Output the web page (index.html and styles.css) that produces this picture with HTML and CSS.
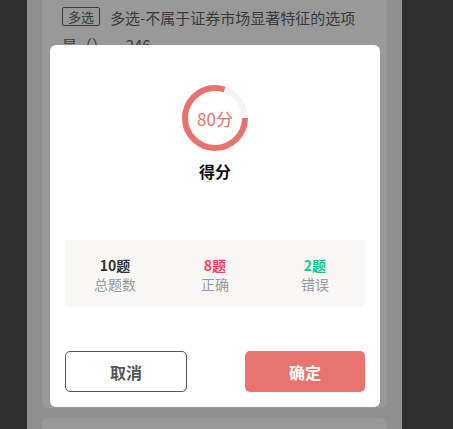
FILE: index.html
```html
<!DOCTYPE html>
<html lang="zh">
<head>
<meta charset="utf-8">
<link rel="stylesheet" href="styles.css">
</head>
<body>
<div class="page">
  <div class="card first">
    <div class="question">
      <div class="qline"><span class="tag">多选</span><span class="qtext">多选-不属于证券市场显著特征的选项</span></div>
      <div class="qline">是（）&nbsp;&nbsp;&nbsp;&nbsp;-246</div>
    </div>
  </div>
  <div class="card second"></div>
</div>
<div class="modal">
  <div class="ring">
    <svg width="66" height="66" viewBox="0 0 66 66">
      <circle cx="33" cy="33" r="30" fill="none" stroke="#f6f4f2" stroke-width="6"/>
      <circle cx="33" cy="33" r="30" fill="none" stroke="#e8736e" stroke-width="6" stroke-dasharray="150.8 188.5"/>
    </svg>
    <span class="score">80分</span>
  </div>
  <div class="score-label">得分</div>
  <div class="stats">
    <div class="stat"><div class="num">10题</div><div class="lbl">总题数</div></div>
    <div class="stat"><div class="num right">8题</div><div class="lbl">正确</div></div>
    <div class="stat"><div class="num wrong">2题</div><div class="lbl">错误</div></div>
  </div>
  <div class="actions">
    <button class="btn cancel">取消</button>
    <button class="btn ok">确定</button>
  </div>
</div>
</body>
</html>
```
FILE: styles.css
```css
html, body {
  margin: 0;
  padding: 0;
  height: 100%;
  background: #2f2f2f;
  font-family: "Noto Sans CJK SC", "Noto Sans", sans-serif;
  overflow: hidden;
}
.page {
  margin-left: 27px;
  width: 375px;
  height: 429px;
  background: #8f8f8f;
  padding: 0 15px;
  box-sizing: border-box;
  display: flex;
  flex-direction: column;
  gap: 10px;
  overflow: hidden;
}
.card {
  background: #999999;
  border-radius: 0 0 6px 6px;
  flex-shrink: 0;
}
.card.first {
  height: 408px;
  padding: 4px 20px 0 20px;
  box-sizing: border-box;
}
.card.second {
  height: 40px;
  border-radius: 6px 6px 0 0;
}
.question {
  font-size: 15px;
  line-height: 27px;
  color: #3a3a3a;
}
.qline {
  white-space: nowrap;
}
.tag {
  display: inline-block;
  border: 1px solid #3a3a3a;
  font-size: 13px;
  line-height: 17px;
  padding: 0 5px;
  border-radius: 2px;
  margin-right: 10px;
  vertical-align: 2px;
}
.modal {
  position: fixed;
  left: 50px;
  top: 45px;
  width: 330px;
  height: 362px;
  background: #fff;
  border-radius: 6px;
  box-sizing: border-box;
  padding: 40px 15px 15px;
  display: flex;
  flex-direction: column;
  align-items: center;
}
.ring {
  position: relative;
  width: 66px;
  height: 66px;
}
.ring svg {
  display: block;
}
.score {
  position: absolute;
  inset: 0;
  display: flex;
  align-items: center;
  justify-content: center;
  color: #e8736e;
  font-size: 17px;
}
.score-label {
  margin-top: 10px;
  font-size: 16px;
  line-height: 20px;
  font-weight: bold;
  color: #111;
}
.stats {
  margin-top: 59px;
  width: 300px;
  height: 67px;
  box-sizing: border-box;
  background: #f8f7f5;
  border-radius: 4px;
  display: grid;
  grid-template-columns: 1fr 1fr 1fr;
  padding-top: 16px;
  text-align: center;
}
.num {
  font-size: 14px;
  line-height: 18px;
  font-weight: bold;
  color: #333;
}
.num.right { color: #f0435a; }
.num.wrong { color: #17c583; }
.lbl {
  margin-top: 1px;
  font-size: 14px;
  line-height: 18px;
  color: #999;
}
.actions {
  margin-top: 44px;
  width: 300px;
  display: flex;
  justify-content: space-between;
}
.btn {
  width: 122px;
  height: 41px;
  border-radius: 5px;
  font-family: inherit;
  font-size: 16px;
  font-weight: bold;
  box-sizing: border-box;
  padding: 0;
}
.cancel {
  background: #fff;
  border: 1px solid #555;
  color: #555;
}
.ok {
  width: 120px;
  background: #e9746f;
  border: none;
  color: #fff;
}
```
